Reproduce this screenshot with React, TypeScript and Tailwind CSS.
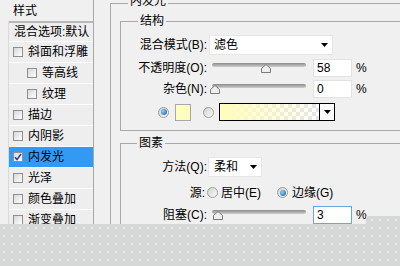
import type { ReactNode } from "react";

const font = "font-['Liberation_Sans','Noto_Sans_CJK_SC',sans-serif]";

function Box({ checked }: { checked?: boolean }) {
  return (
    <span className="flex h-[10px] w-[10px] shrink-0 items-center justify-center border border-[#8e8f8f] bg-gradient-to-br from-[#d8d8d8] to-white">
      {checked ? (
        <svg width="8" height="8" viewBox="0 0 8 8">
          <path d="M1 4.2 L3 6.6 L7 1" stroke="#27379a" strokeWidth="1.5" fill="none" />
        </svg>
      ) : null}
    </span>
  );
}

function Radio({ on }: { on?: boolean }) {
  return (
    <span className="flex h-[11px] w-[11px] shrink-0 items-center justify-center rounded-full border border-[#9c9c9c] bg-gradient-to-br from-[#d2d2d2] to-[#fbfbfb]">
      {on ? <span className="h-[6px] w-[6px] rounded-full bg-[radial-gradient(circle_at_35%_35%,#8fd0f5,#0b5aa3)]" /> : null}
    </span>
  );
}

function Arrow() {
  return (
    <svg width="7" height="4" viewBox="0 0 7 4">
      <path d="M0 0H7L3.5 4Z" fill="#000" />
    </svg>
  );
}

function Slider({ value }: { value: number }) {
  return (
    <div className="relative ml-[5px] h-[18px] w-[94px]">
      <div className="mt-[4px] h-[4px] rounded-full bg-gradient-to-b from-[#8a8a8a] to-[#cfcfcf]" />
      <svg className="absolute top-[5px]" style={{ left: value * 0.88 - 2 }} width="10" height="9" viewBox="0 0 10 9">
        <path d="M5 0.5 L9.5 4.5 V8.5 H0.5 V4.5 Z" fill="#eeeeee" stroke="#7a7a7a" />
      </svg>
    </div>
  );
}

function Num({ value, focus }: { value: string; focus?: boolean }) {
  return (
    <div
      className={
        focus
          ? "ml-[7px] flex h-[18px] w-[39px] items-center border border-[#6ea6dc] bg-white pl-[3px]"
          : "ml-[7px] flex h-[18px] w-[39px] items-center border border-[#e2e2e2] bg-white pl-[3px]"
      }
    >
      {value}
    </div>
  );
}

function Label({ children }: { children: ReactNode }) {
  return <span className="w-[86px] shrink-0 text-right">{children}</span>;
}

function ListRow({ label, checked, indent, active }: { label: string; checked?: boolean; indent?: boolean; active?: boolean }) {
  return (
    <div
      className={[
        "flex h-[21px] items-center border-b border-white",
        active ? "bg-[#3399f3]" : "",
        indent ? "pl-[18px]" : "pl-[4px]",
      ].join(" ")}
    >
      <Box checked={checked} />
      <span className="ml-[5px]">{label}</span>
    </div>
  );
}

export default function App() {
  return (
    <div className={`h-[266px] w-[400px] overflow-hidden bg-[#d5d8d6] [background-image:radial-gradient(circle,#e9ecea_0.7px,transparent_1px)] [background-size:8px_8px] text-[12px] leading-[14px] text-black ${font}`}>
      <div className="flex h-[224px] overflow-hidden bg-[#f0f0f0] [clip-path:polygon(0_0,100%_0,100%_216px,366px_216px,366px_100%,0_100%)]">
        {/* style list */}
        <div className="w-[94px] shrink-0 border-r border-[#a9a9a9] pl-[8px]">
          <div className="flex h-[21px] items-center pl-[5px]">样式</div>
          <div className="border-l border-[#dadada] bg-[#eeeeee]">
            <div className="h-[2px] bg-[#b9b9b9]" />
            <div className="flex h-[19px] items-center border-b border-white pl-[5px]">混合选项:默认</div>
            <ListRow label="斜面和浮雕" />
            <ListRow label="等高线" indent />
            <ListRow label="纹理" indent />
            <ListRow label="描边" />
            <ListRow label="内阴影" />
            <ListRow label="内发光" checked active />
            <ListRow label="光泽" />
            <ListRow label="颜色叠加" />
            <ListRow label="渐变叠加" />
          </div>
        </div>

        {/* settings */}
        <div className="min-w-0 flex-1 pl-[16px] pt-[3px]">
          <div className="relative border-l border-t border-[#a9a9a9] pl-[9px] pt-[17px]">
            <span className="absolute left-[17px] top-[-10px] bg-[#f0f0f0] px-[2px]">内发光</span>

            <div className="relative h-[110px] border-y border-l border-[#a9a9a9] pt-[13px]">
              <span className="absolute left-[17px] top-[-8px] bg-[#f0f0f0] px-[2px]">结构</span>

              <div className="flex h-[20px] items-center">
                <Label>混合模式(B):</Label>
                <div className="ml-[2px] flex h-[20px] w-[124px] items-center justify-between border border-[#e6e6e6] bg-white pl-[4px] pr-[4px]">
                  <span>滤色</span>
                  <Arrow />
                </div>
              </div>

              <div className="mt-[4px] flex h-[18px] items-center">
                <Label>不透明度(O):</Label>
                <Slider value={58} />
                <Num value="58" />
                <span className="ml-[4px]">%</span>
              </div>

              <div className="mt-[3px] flex h-[18px] items-center">
                <Label>杂色(N):</Label>
                <Slider value={0} />
                <Num value="0" />
                <span className="ml-[4px]">%</span>
              </div>

              <div className="mt-[5px] flex h-[18px] items-center pl-[37px]">
                <Radio on />
                <span className="ml-[6px] h-[17px] w-[16px] border border-[#a8a8a8] bg-[#fffcc0]" />
                <span className="ml-[12px]">
                  <Radio />
                </span>
                <div className="ml-[5px] flex h-[18px] w-[116px] border border-black">
                  <div className="flex-1 [background-image:linear-gradient(to_right,#fffcc0_10%,rgba(255,252,192,0)),conic-gradient(#e4e4e4_25%,#ffffff_0_50%,#e4e4e4_0_75%,#ffffff_0)] [background-size:100%_100%,8px_8px]" />
                  <div className="flex w-[15px] items-center justify-center border-l border-black bg-white">
                    <Arrow />
                  </div>
                </div>
              </div>
            </div>

            <div className="relative mt-[12px] h-[100px] border-l border-t border-[#a9a9a9] pt-[13px]">
              <span className="absolute left-[16px] top-[-8px] bg-[#f0f0f0] px-[2px]">图素</span>

              <div className="flex h-[20px] items-center">
                <Label>方法(Q):</Label>
                <div className="ml-[1px] flex h-[20px] w-[54px] items-center justify-between border border-[#e6e6e6] bg-white pl-[5px] pr-[4px]">
                  <span>柔和</span>
                  <Arrow />
                </div>
              </div>

              <div className="mt-[7px] flex h-[17px] items-center">
                <span className="w-[84px] shrink-0 text-right">源:</span>
                <span className="ml-[2px]">
                  <Radio />
                </span>
                <span className="ml-[3px] w-[56px]">居中(E)</span>
                <Radio on />
                <span className="ml-[4px]">边缘(G)</span>
              </div>

              <div className="mt-[5px] flex h-[18px] items-center">
                <Label>阻塞(C):</Label>
                <Slider value={3} />
                <Num value="3" focus />
                <span className="ml-[4px]">%</span>
              </div>
            </div>
          </div>
        </div>
      </div>
    </div>
  );
}
